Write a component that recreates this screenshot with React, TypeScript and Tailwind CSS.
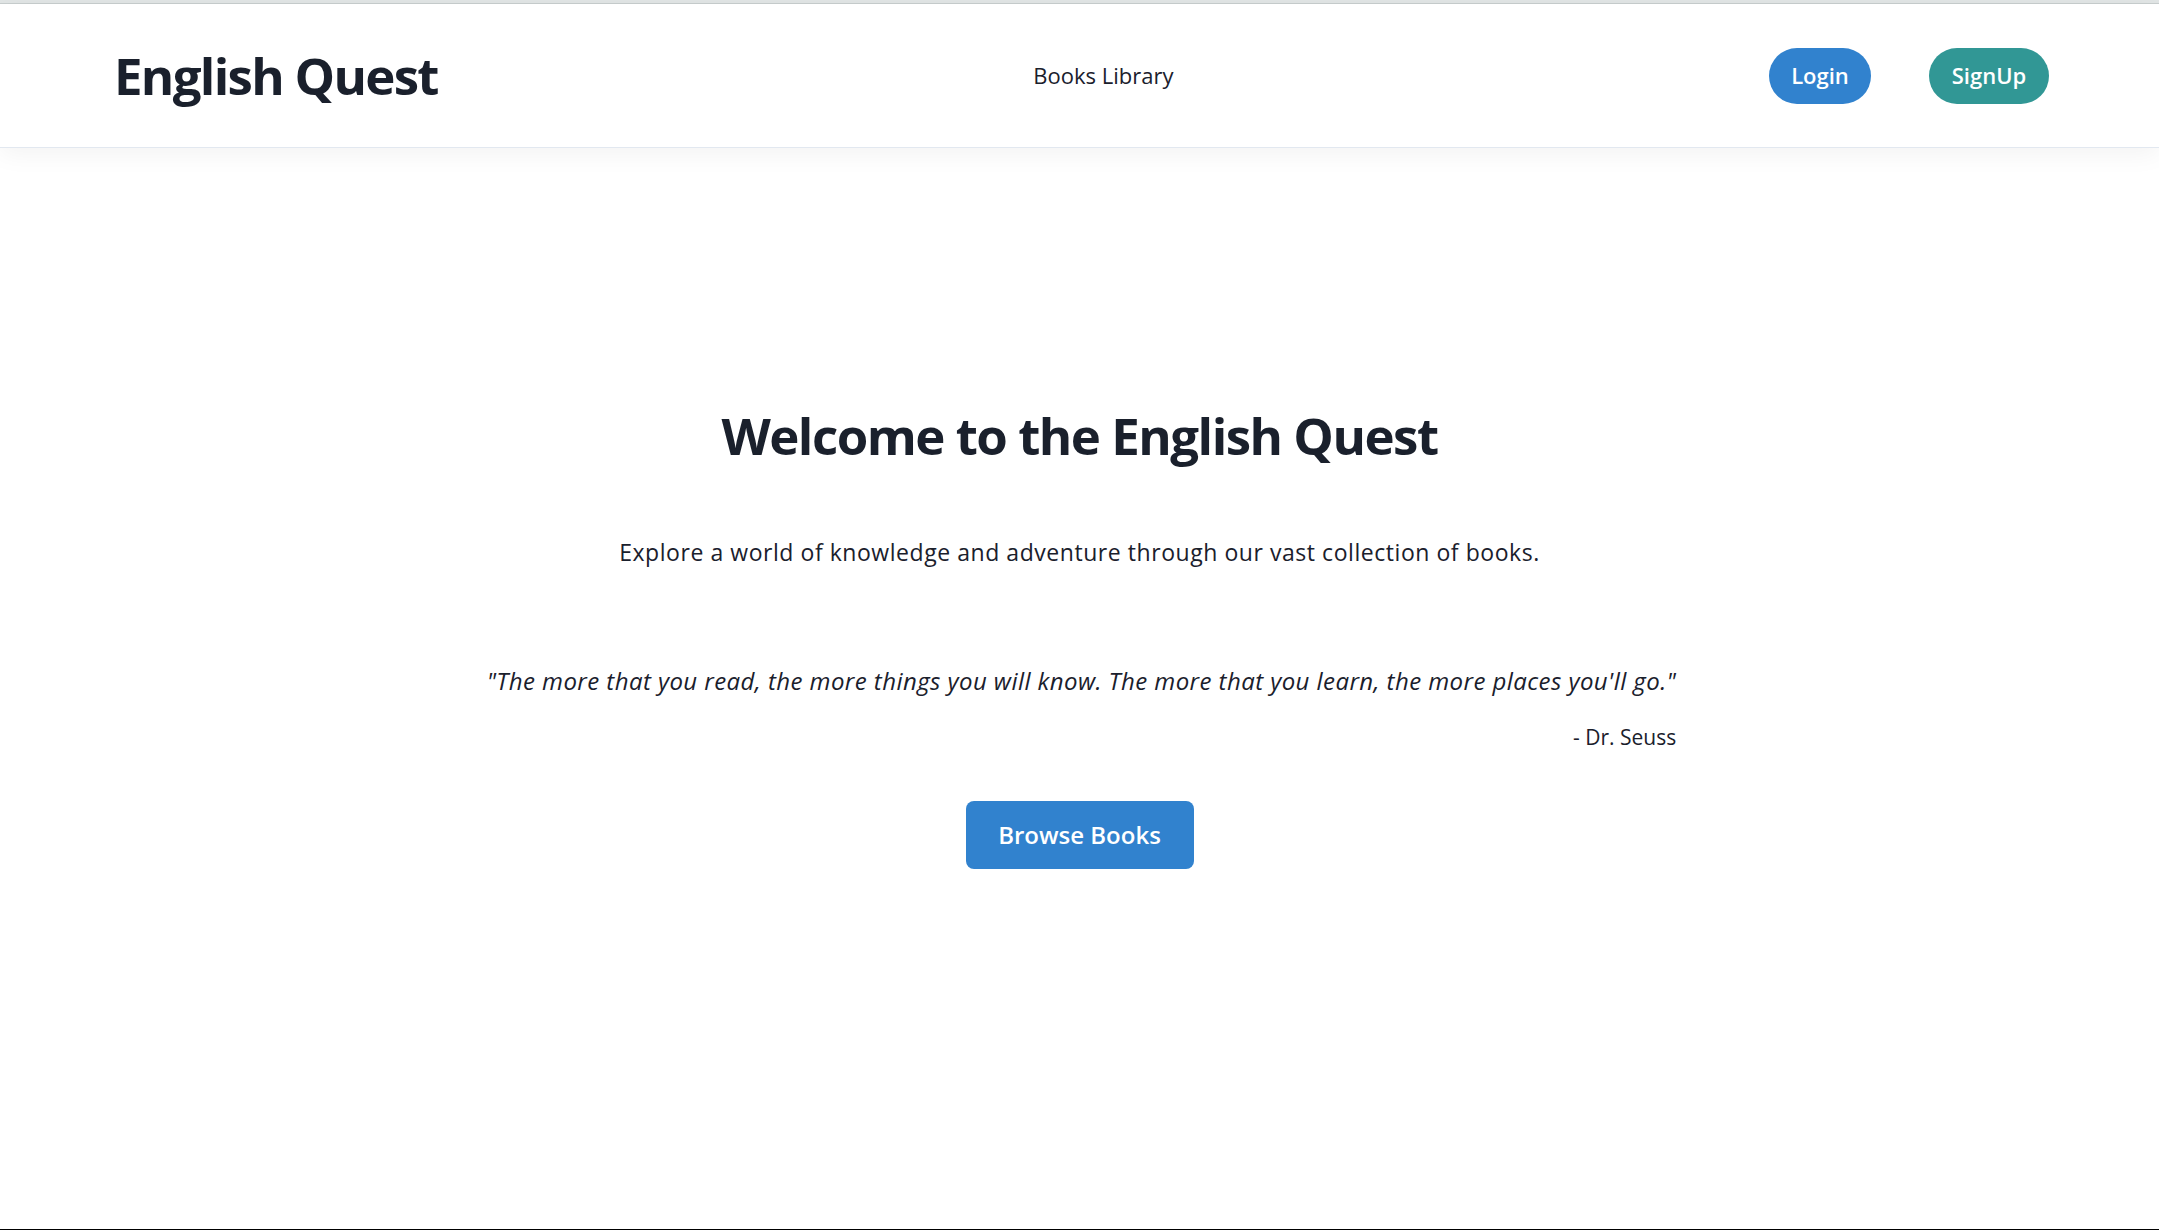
import React from "react";

const font = { fontFamily: '"Open Sans", "Noto Sans", sans-serif' };

const Header = () => {
  return (
    <header className="bg-white border-b border-[#e2e8f0] shadow-[0_6px_24px_rgba(0,0,0,0.05)] relative z-10">
      <div className="h-[143px] flex items-center justify-between pl-[114px] pr-[110px]">
        <h1 className="text-[51px] font-bold text-[#1a202c] leading-none tracking-[-1.7px]">
          English Quest
        </h1>
        <a className="text-[22px] text-[#1a202c] cursor-pointer">Books Library</a>
        <div className="flex items-center gap-[58px]">
          <button className="h-[56px] w-[102px] rounded-full bg-[#3182ce] text-white text-[22px] font-semibold">
            Login
          </button>
          <button className="h-[56px] w-[120px] rounded-full bg-[#319795] text-white text-[22px] font-semibold">
            SignUp
          </button>
        </div>
      </div>
    </header>
  );
};

const Hero = () => {
  return (
    <main className="flex flex-col items-center text-[#1a202c] pt-[257px]">
      <h2 className="text-[51px] font-bold leading-[1.2] tracking-[-1.5px]">
        Welcome to the English Quest
      </h2>
      <p className="mt-[69px] text-[23px] leading-[1.5] tracking-[0.55px]">
        Explore a world of knowledge and adventure through our vast collection of books.
      </p>
      <div className="mt-[93px] flex flex-col items-end translate-x-[2px]">
        <p className="text-[24px] italic leading-[1.5] tracking-[0.43px]">
          "The more that you read, the more things you will know. The more that you learn, the more places you'll go."
        </p>
        <p className="mt-[23px] text-[21px] leading-[1.5]">- Dr. Seuss</p>
      </div>
      <button className="mt-[48px] h-[68px] w-[228px] rounded-[8px] bg-[#3182ce] text-white text-[24px] font-semibold">
        Browse Books
      </button>
    </main>
  );
};

export default function App() {
  return (
    <div className="w-full h-[1230px] bg-white flex flex-col overflow-hidden" style={font}>
      <div className="h-[4px] bg-[#e1e5e5] border-b border-[#c8cece]" />
      <Header />
      <div className="flex-1">
        <Hero />
      </div>
      <div className="h-px bg-black" />
    </div>
  );
}
